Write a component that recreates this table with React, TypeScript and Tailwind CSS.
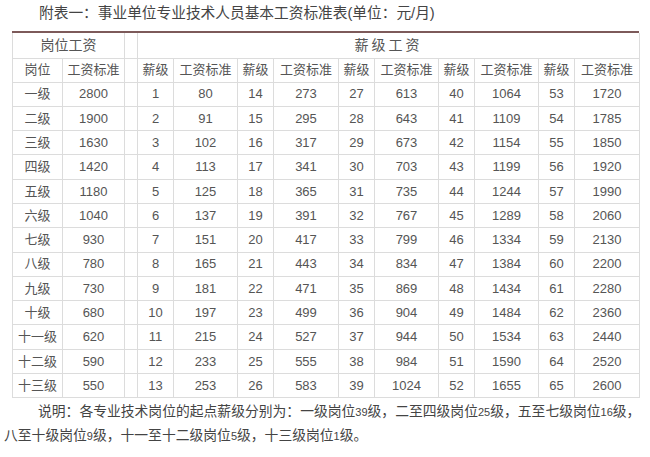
import React from 'react';

const widths = [50, 62, 13, 36, 64, 36, 65, 36, 64, 36, 64, 36, 65];

const rows: [string, number, number[]][] = [
  ['一级', 2800, [1, 80, 14, 273, 27, 613, 40, 1064, 53, 1720]],
  ['二级', 1900, [2, 91, 15, 295, 28, 643, 41, 1109, 54, 1785]],
  ['三级', 1630, [3, 102, 16, 317, 29, 673, 42, 1154, 55, 1850]],
  ['四级', 1420, [4, 113, 17, 341, 30, 703, 43, 1199, 56, 1920]],
  ['五级', 1180, [5, 125, 18, 365, 31, 735, 44, 1244, 57, 1990]],
  ['六级', 1040, [6, 137, 19, 391, 32, 767, 45, 1289, 58, 2060]],
  ['七级', 930, [7, 151, 20, 417, 33, 799, 46, 1334, 59, 2130]],
  ['八级', 780, [8, 165, 21, 443, 34, 834, 47, 1384, 60, 2200]],
  ['九级', 730, [9, 181, 22, 471, 35, 869, 48, 1434, 61, 2280]],
  ['十级', 680, [10, 197, 23, 499, 36, 904, 49, 1484, 62, 2360]],
  ['十一级', 620, [11, 215, 24, 527, 37, 944, 50, 1534, 63, 2440]],
  ['十二级', 590, [12, 233, 25, 555, 38, 984, 51, 1590, 64, 2520]],
  ['十三级', 550, [13, 253, 26, 583, 39, 1024, 52, 1655, 65, 2600]],
];

const cell = 'border border-[#dcdcdc] text-center p-0';
const font = { fontFamily: '"Liberation Sans", "Noto Sans CJK SC", sans-serif' };

const Num: React.FC<{ children: React.ReactNode }> = ({ children }) => (
  <span className="text-[11px]">{children}</span>
);

export default function App() {
  return (
    <div className="w-[650px] h-[457px] bg-white overflow-hidden text-[#555]" style={font}>
      {/* 标题 */}
      <div className="h-[31px] pl-[39px] pt-[3px] text-[14.7px] leading-[20px] text-[#444]">
        附表一：事业单位专业技术人员基本工资标准表(单位：元/月)
      </div>

      {/* 表格 */}
      <div className="ml-[12px] w-[627px] border-t-2 border-[#7d5a5a]">
        <table className="table-fixed border-collapse w-[627px] text-[13px]">
          <colgroup>
            {widths.map((w, i) => (
              <col key={i} style={{ width: w }} />
            ))}
          </colgroup>
          <thead>
            <tr className="h-[25px]">
              <th colSpan={2} className={`${cell} font-normal text-[14px] border-t-0`}>岗位工资</th>
              <th className={`${cell} border-t-0`}></th>
              <th colSpan={10} className={`${cell} font-normal text-[14px] tracking-[3px] border-t-0`}>薪级工资</th>
            </tr>
            <tr className="h-[24px]">
              <th className={`${cell} font-normal`}>岗位</th>
              <th className={`${cell} font-normal`}>工资标准</th>
              <th className={cell}></th>
              {[0, 1, 2, 3, 4].map(i => (
                <React.Fragment key={i}>
                  <th className={`${cell} font-normal`}>薪级</th>
                  <th className={`${cell} font-normal`}>工资标准</th>
                </React.Fragment>
              ))}
            </tr>
          </thead>
          <tbody>
            {rows.map(([name, base, vals]) => (
              <tr key={name} className="h-[24.3px]">
                <td className={cell}>{name}</td>
                <td className={cell}>{base}</td>
                <td className={cell}></td>
                {vals.map((v, i) => (
                  <td key={i} className={cell}>{v}</td>
                ))}
              </tr>
            ))}
          </tbody>
        </table>
      </div>

      {/* 说明 */}
      <div className="pt-[2px] pl-[4px] text-[13.8px] leading-[24px] text-[#444]">
        <div className="pl-[34px]">
          说明：各专业技术岗位的起点薪级分别为：一级岗位<Num>39</Num>级，二至四级岗位<Num>25</Num>级，五至七级岗位<Num>16</Num>级，
        </div>
        <div>
          八至十级岗位<Num>9</Num>级，十一至十二级岗位<Num>5</Num>级，十三级岗位<Num>1</Num>级。
        </div>
      </div>
    </div>
  );
}
